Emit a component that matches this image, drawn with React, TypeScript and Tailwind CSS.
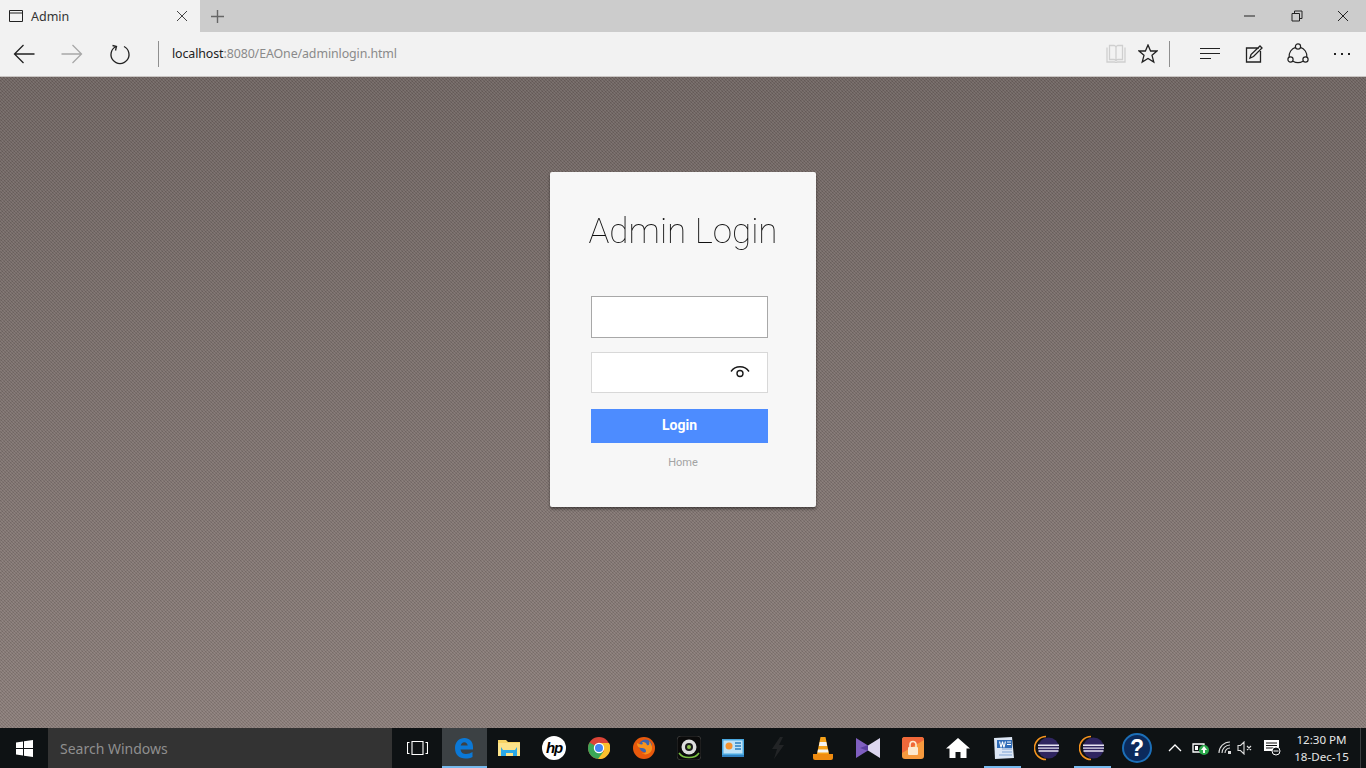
import type { ReactNode } from "react"

const SANS = "font-['Noto_Sans','Open_Sans',sans-serif]"

function Line({ d, className = "", size = 20, box = 20, sw = 1.2 }: { d: string; className?: string; size?: number; box?: number; sw?: number }) {
  return (
    <svg width={size} height={size} viewBox={`0 0 ${box} ${box}`} fill="none" stroke="currentColor" strokeWidth={sw} className={className}>
      <path d={d} />
    </svg>
  )
}

function TabStrip() {
  return (
    <div className="flex h-8 bg-[#cccccc] text-[#222]">
      <div className="flex w-[200px] items-center bg-[#f2f2f2]">
        <Line className="ml-[9px]" size={14} box={14} sw={1} d="M.5 1.5h13v11H.5zM.5 4h13" />
        <span className={`ml-2 pt-[3px] text-[12.5px] text-[#333] ${SANS}`}>Admin</span>
        <Line className="ml-auto mr-[12px] text-[#444]" size={12} box={12} sw={1} d="M1 1l10 10M11 1L1 11" />
      </div>
      <div className="flex w-[34px] items-center justify-center text-[#666]">
        <Line size={13} box={13} sw={1.4} d="M6.5 0v13M0 6.5h13" />
      </div>
      <div className="ml-auto flex items-center text-[#222]">
        <div className="flex w-[46px] justify-center pr-[2px]"><Line size={12} box={12} sw={1} d="M0 6h11" /></div>
        <div className="flex w-[46px] justify-center"><Line size={12} box={12} sw={1} d="M1 3.5h7.5v7.5H1zM3.5 3.5V1H11v7.5H8.5" /></div>
        <div className="flex w-[46px] justify-center"><Line size={12} box={12} sw={1} d="M1 1l10 10M11 1L1 11" /></div>
      </div>
    </div>
  )
}

function Toolbar() {
  return (
    <div className="flex h-[45px] items-center border-b border-[#c9c5c3] bg-[#f2f2f2] text-[#222]">
      <div className="flex w-12 justify-center">
        <Line size={22} box={22} sw={1.3} d="M1.5 11h20M10.5 2l-9 9 9 9" />
      </div>
      <div className="flex w-12 justify-center text-[#a8a8a8]">
        <Line size={22} box={22} sw={1.3} d="M.5 11h20M11.5 2l9 9-9 9" />
      </div>
      <div className="flex w-12 justify-center">
        <Line size={22} box={22} sw={1.3} d="M7 3.5A9 9 0 1 0 15 3.5M3.5 2.5L7.5 3.5 6.5 7.5" />
      </div>
      <div className="ml-[14px] h-[26px] w-px bg-[#8f8f8f]" />
      <div className={`ml-[13px] pt-px text-[12.4px] tracking-[-0.1px] ${SANS}`}>
        <span className="text-[#222]">localhost</span>
        <span className="text-[#8a8a8a]">:8080/EAOne/adminlogin.html</span>
      </div>
      <div className="ml-auto flex items-center">
        <div className="flex w-8 justify-center text-[#cfcfcf]">
          <Line size={20} box={20} sw={1.3} d="M1 3.500V18h7.500c.7 0 1.500.5 1.500 1 0-.5.800-1 1.500-1H19V3.500M3.500 1.500V15.500H8c1 0 2 .5 2 1.500V3.500c0-1-1-2-2-2zM16.500 1.500V15.500H12c-1 0-2 .5-2 1.500V3.500c0-1 1-2 2-2z" />
        </div>
        <div className="flex w-8 justify-center">
          <Line size={20} box={20} sw={1.3} d="M10 1l2.6 6H19l-5 4.3 1.8 6.7L10 14.4 4.2 18 6 11.3 1 7h6.4z" />
        </div>
        <div className="ml-[5px] h-[26px] w-px bg-[#8f8f8f]" />
        <div className="ml-[18px] flex w-11 justify-center">
          <Line size={20} box={20} sw={1.2} d="M0 4.5h20M0 9.5h20M0 14.5h11" />
        </div>
        <div className="flex w-11 justify-center">
          <Line size={20} box={20} sw={1.3} d="M15 4H2.5v14h14V7M6 14l1-3.5L16 2l2 2-8.5 8.5z" />
        </div>
        <div className="flex w-11 justify-center">
          <svg width="22" height="22" viewBox="0 0 22 22" fill="none" stroke="currentColor" strokeWidth="1.2">
            <circle cx="11" cy="3.5" r="2.6" />
            <circle cx="3.5" cy="16.5" r="2.6" />
            <circle cx="18.5" cy="16.5" r="2.6" />
            <path d="M8.6 4.4A9 9 0 0 0 2.2 14M13.4 4.4A9 9 0 0 1 19.8 14M6 18.2a10 10 0 0 0 10 0" />
          </svg>
        </div>
        <div className="flex w-11 justify-center gap-[5px]">
          <i className="h-[2px] w-[2px] bg-[#222]" />
          <i className="h-[2px] w-[2px] bg-[#222]" />
          <i className="h-[2px] w-[2px] bg-[#222]" />
        </div>
        <div className="w-[2px]" />
      </div>
    </div>
  )
}

function LoginCard() {
  return (
    <div className="flex h-[335px] w-[266px] flex-col rounded-[2px] bg-[#f7f7f7] shadow-[0_2px_3px_rgba(0,0,0,0.45)]">
      <h1 className="mt-[36px] text-center font-['Roboto',sans-serif] text-[35px] font-thin leading-[47px] text-[#111] [will-change:transform]">
        Admin Login
      </h1>
      <div className="ml-[41px] mt-[41px] flex w-[177px] flex-col">
        <input readOnly className="h-[42px] w-full border border-[#a8a8a8] bg-white outline-none" />
        <div className="mt-[14px] flex h-[41px] w-full items-center justify-end border border-[#d8d8d8] bg-white pb-[2px] pr-[17px]">
          <svg width="20" height="14" viewBox="0 0 20 14" fill="none" stroke="#1a1a1a" strokeWidth="1.4">
            <path d="M1 6.5a11 11 0 0 1 18 0" />
            <circle cx="10" cy="8.5" r="3" />
          </svg>
        </div>
        <button className="mt-4 h-[34px] w-full bg-[#4d8cff] pb-[2px] font-['Roboto',sans-serif] text-[14px] font-bold text-white">
          Login
        </button>
      </div>
      <a className="mt-[13px] text-center font-['Roboto',sans-serif] text-[11px] leading-[14px] text-[#a3a3a3]">Home</a>
    </div>
  )
}

function Slot({ children, active, underline }: { children: ReactNode; active?: boolean; underline?: boolean }) {
  return (
    <div className={`relative flex h-10 w-[44.85px] shrink-0 items-center justify-center ${active ? "bg-[#3c4144]" : ""}`}>
      {children}
      {(active || underline) && (
        <div className={`absolute bottom-0 h-[2px] bg-[#76b9ed] ${active ? "inset-x-0" : "inset-x-[4px]"}`} />
      )}
    </div>
  )
}

function EclipseIcon() {
  return (
    <svg width="26" height="26" viewBox="0 0 26 26">
      <path d="M12 1.500a11.500 11.500 0 0 0 0 23" fill="none" stroke="#f7941e" strokeWidth="1.600" />
      <circle cx="14.500" cy="13" r="10.500" fill="#2f2560" />
      <path d="M4 9.500h21v1.400H4zM4 12.400h21v1.400H4zM4.500 15.300h20v1.400h-20z" fill="#e8e4f2" />
    </svg>
  )
}

function TaskIcons() {
  return (
    <>
      <Slot active>
        <svg width="20" height="22" viewBox="0 0 20 22">
          <path d="M1 11C1 5 5 1 10.500 1c5 0 8.500 3.500 8.500 9v2.500H6.500c.4 3 2.500 4.500 5.500 4.500 2.500 0 4.500-.7 6.500-2v5c-2 1-4.500 1.500-7 1.500C5 21.500 1 17.500 1 11zm5.700-2.500h7c-.2-2-1.500-3.300-3.400-3.300-1.900 0-3.200 1.300-3.600 3.300z" fill="#0b78d6" />
        </svg>
      </Slot>
      <Slot>
        <svg width="22" height="20" viewBox="0 0 22 20">
          <path d="M0 2h8l2 2h12v14H0z" fill="#f6d365" />
          <path d="M0 5h22v13H0z" fill="#fce38a" />
          <path d="M5 12h12l2-3v9h-4v-3H8v3H3V9z" fill="#2aa9e8" />
        </svg>
      </Slot>
      <Slot>
        <div className="flex h-6 w-6 items-center justify-center rounded-full bg-white font-['Liberation_Sans',sans-serif] text-[15px] font-bold italic tracking-[-1px] text-black">
          hp
        </div>
      </Slot>
      <Slot>
        <svg width="22" height="22" viewBox="0 0 22 22">
          <circle cx="11" cy="11" r="11" fill="#db4437" />
          <path d="M11 11L1.500 5.500A11 11 0 0 0 11 22l5-6z" fill="#3aa757" />
          <path d="M11 6h10A11 11 0 0 1 10 22l6-8z" fill="#fbc02d" />
          <circle cx="11" cy="11" r="5.200" fill="#fff" />
          <circle cx="11" cy="11" r="4" fill="#4285f4" />
        </svg>
      </Slot>
      <Slot>
        <svg width="22" height="22" viewBox="0 0 22 22">
          <circle cx="11" cy="11" r="11" fill="#e8590c" />
          <circle cx="12.500" cy="9" r="6.500" fill="#3b64b0" />
          <path d="M4 6c0 4 2 5 5 5 2 0 4 1 4 3s-2 3-4 2c3 3 9 1 10-4 .5-3-1-6-3-8 1 3 0 5-2 4-1-3-3-3-5-3 1 1 1 2 0 2.500C7 7 5 7 4 6z" fill="#f7931e" />
        </svg>
      </Slot>
      <Slot>
        <svg width="24" height="24" viewBox="0 0 24 24">
          <rect width="24" height="24" rx="4" fill="#0a0a0a" stroke="#333" />
          <path d="M2 17c4 6 16 6 20 0" fill="none" stroke="#7ac143" strokeWidth="1.500" />
          <circle cx="12" cy="11" r="7.500" fill="#ddd" />
          <circle cx="12" cy="11" r="4" fill="#1a1a1a" />
          <circle cx="12" cy="11" r="2" fill="#8bc34a" />
        </svg>
      </Slot>
      <Slot>
        <svg width="22" height="18" viewBox="0 0 22 18">
          <rect width="22" height="16" fill="#4aa8e0" />
          <rect x="1.500" y="1.500" width="19" height="13" fill="#bfe3f7" />
          <circle cx="7" cy="7" r="3.500" fill="#f59331" />
          <path d="M13 4h6M13 7h6M13 10h6" stroke="#2a7fc0" strokeWidth="1.500" />
          <rect y="16" width="22" height="2" fill="#2f80c0" />
        </svg>
      </Slot>
      <Slot>
        <svg width="14" height="22" viewBox="0 0 14 22">
          <path d="M9 0L1 12h5l-3 10 10-14H8l4-8z" fill="#222426" />
        </svg>
      </Slot>
      <Slot>
        <svg width="22" height="24" viewBox="0 0 22 24">
          <path d="M8.500 1h5L17 18H5z" fill="#f6a21a" />
          <path d="M7.700 6h6.600l.8 4H6.900zM6 13.500h10l.6 3H5.400z" fill="#f3f3f3" />
          <path d="M1 18h20v4a2 2 0 0 1-2 2H3a2 2 0 0 1-2-2z" fill="#ef8b10" />
        </svg>
      </Slot>
      <Slot>
        <svg width="24" height="20" viewBox="0 0 24 20">
          <path d="M0 0l12 7.500V12.500L0 20z" fill="#7f5fc0" />
          <path d="M24 0L12 7.500V12.500L24 20z" fill="#dcd6ef" />
          <path d="M4 10l8-3v6z" fill="#5a3fa0" />
        </svg>
      </Slot>
      <Slot>
        <svg width="22" height="22" viewBox="0 0 22 22">
          <rect width="22" height="22" rx="3" fill="#f79a3e" />
          <path d="M0 3a3 3 0 0 1 3-3h16a3 3 0 0 1 3 3L0 16z" fill="#f0683a" />
          <rect x="6" y="10" width="10" height="8" rx="1" fill="#fde9d0" />
          <path d="M8 10V7.500a3 3 0 0 1 6 0V10" fill="none" stroke="#fde9d0" strokeWidth="1.600" />
        </svg>
      </Slot>
      <Slot>
        <svg width="24" height="20" viewBox="0 0 24 20">
          <path d="M12 0L0 10.500h3.500V20h6v-6h5v6h6v-9.500H24z" fill="#fff" />
        </svg>
      </Slot>
      <Slot underline>
        <svg width="24" height="24" viewBox="0 0 24 24">
          <path d="M3 2l18-1 2 21-19 1z" fill="#dce6f4" />
          <path d="M11 13h10M11 16h10M8 19h13" stroke="#7fa3d4" />
          <path d="M6 4h15v8H6z" fill="#2f6cb8" />
          <path d="M8 5.500h1.200l.8 4 1-4h1l1 4 .8-4H15l-1.500 6h-1.100l-.9-3.500-.9 3.500H9.500z" fill="#fff" />
          <path d="M16 6h4M16 8.500h4" stroke="#fff" />
        </svg>
      </Slot>
      <Slot><EclipseIcon /></Slot>
      <Slot underline><EclipseIcon /></Slot>
      <Slot>
        <div className="flex h-[30px] w-[30px] items-center justify-center rounded-full border-2 border-[#1c6fb8] bg-[#0b2a5c] font-['Liberation_Sans',sans-serif] text-[23px] font-bold leading-none text-white">
          ?
        </div>
      </Slot>
    </>
  )
}

function Tray() {
  return (
    <div className="ml-2 flex min-w-0 flex-1 items-center text-white">
      <Line size={14} box={14} sw={1.3} d="M1 10l6-6 6 6" />
      <svg className="ml-[10px]" width="18" height="14" viewBox="0 0 18 14">
        <path d="M1 3h11v8H1z" fill="none" stroke="#fff" strokeWidth="1.300" />
        <path d="M3 5h3v4H3z" fill="#fff" />
        <circle cx="12" cy="9" r="5" fill="#2aa84a" />
        <path d="M12 5l3 4h-2v3h-2V9H9z" fill="#fff" />
      </svg>
      <svg className="ml-[8px]" width="14" height="14" viewBox="0 0 14 14" fill="none" stroke="#ddd" strokeWidth="1.100">
        <path d="M1 12A11 11 0 0 1 12 1M4 12a8 8 0 0 1 8-8M7 12a5 5 0 0 1 5-5" />
        <rect x="10" y="10" width="3" height="3" fill="#ddd" stroke="none" />
      </svg>
      <svg className="ml-[5px]" width="16" height="14" viewBox="0 0 16 14" fill="none" stroke="#ddd" strokeWidth="1.100">
        <path d="M1 4.500h2.500L7 1v12L3.500 9.500H1zM10 5l4 4M14 5l-4 4" />
      </svg>
      <svg className="ml-[11px]" width="17" height="16" viewBox="0 0 17 16">
        <path d="M0 0h15v11H0z" fill="#fff" />
        <path d="M2 3h11M2 5.500h11M2 8h7" stroke="#111" />
        <circle cx="12" cy="11" r="4" fill="#0e1214" stroke="#fff" />
        <path d="M9.500 11h5" stroke="#fff" />
      </svg>
      <div className={`ml-[5px] w-[72px] shrink-0 text-center text-[11.6px] leading-[17px] text-[#e6e6e6] ${SANS}`}>
        <div>12:30 PM</div>
        <div>18-Dec-15</div>
      </div>
      <div className="ml-[2px] h-full w-px bg-[#3a3d3f]" />
    </div>
  )
}

function Taskbar() {
  return (
    <div className="flex h-10 items-stretch bg-[#0e1214]">
      <div className="flex w-12 shrink-0 items-center justify-center">
        <svg width="17" height="17" viewBox="0 0 17 17" fill="#fff">
          <path d="M0 2.500L7 1.500V8H0zM8 1.300L17 0v8H8zM0 9h7v6.500L0 14.500zM8 9h9v8l-9-1.300z" />
        </svg>
      </div>
      <div className={`flex w-[344px] shrink-0 items-center bg-[#333333] pl-3 text-[14px] text-[#8f8f8f] ${SANS}`}>
        Search Windows
      </div>
      <div className="flex w-[50px] shrink-0 items-center justify-center text-white">
        <svg width="21" height="14" viewBox="0 0 21 14" fill="none" stroke="currentColor" strokeWidth="1.100">
          <path d="M5 .500h11v13H5zM2.500 1.500H.500v11h2M18.500 1.500h2v11h-2" />
        </svg>
      </div>
      <TaskIcons />
      <Tray />
    </div>
  )
}

export default function App() {
  return (
    <div className="flex h-[768px] w-[1366px] flex-col overflow-hidden">
      <TabStrip />
      <Toolbar />
      <main className="flex flex-1 justify-center bg-[repeating-linear-gradient(45deg,rgba(0,0,0,0.08)_0px,rgba(0,0,0,0.08)_0.7071px,rgba(255,255,255,0.05)_0.7071px,rgba(255,255,255,0.05)_2.1213px),repeating-linear-gradient(135deg,rgba(0,0,0,0.04)_0px,rgba(0,0,0,0.04)_1.4142px,rgba(255,255,255,0.03)_1.4142px,rgba(255,255,255,0.03)_2.8284px),linear-gradient(180deg,#6f6461_0%,#8a7d79_100%)] pt-[95px]">
        <LoginCard />
      </main>
      <Taskbar />
    </div>
  )
}
